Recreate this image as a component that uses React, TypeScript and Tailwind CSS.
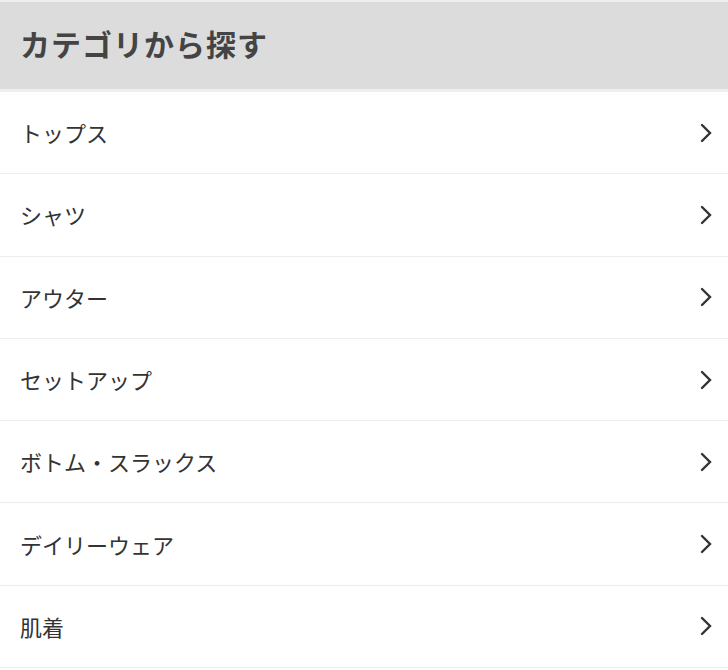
const categories = [
  'トップス',
  'シャツ',
  'アウター',
  'セットアップ',
  'ボトム・スラックス',
  'デイリーウェア',
  '肌着',
]

function Chevron() {
  return (
    <svg width="14" height="20" viewBox="0 0 14 20" fill="none" className="shrink-0">
      <path d="M3 2 L11 10 L3 18" stroke="#333" strokeWidth="2.4" strokeLinecap="round" strokeLinejoin="miter" />
    </svg>
  )
}

export default function App() {
  return (
    <div
      className="w-[728px] bg-white"
      style={{ fontFamily: '"Noto Sans CJK JP", "Noto Sans", sans-serif' }}
    >
      <div className="h-[92px] border-t-2 border-b-[3px] border-[#eeeeee] bg-[#dcdcdc] flex items-center px-5 pb-1">
        <h2 className="text-[30px] font-bold text-[#444] tracking-[1px]">カテゴリから探す</h2>
      </div>
      <ul>
        {categories.map(c => (
          <li
            key={c}
            className="h-[82.3px] border-b-[1.5px] border-[#ececec] flex items-center justify-between pl-5 pr-[15px]"
          >
            <span className="text-[22px] text-[#333]">{c}</span>
            <Chevron />
          </li>
        ))}
      </ul>
    </div>
  )
}
